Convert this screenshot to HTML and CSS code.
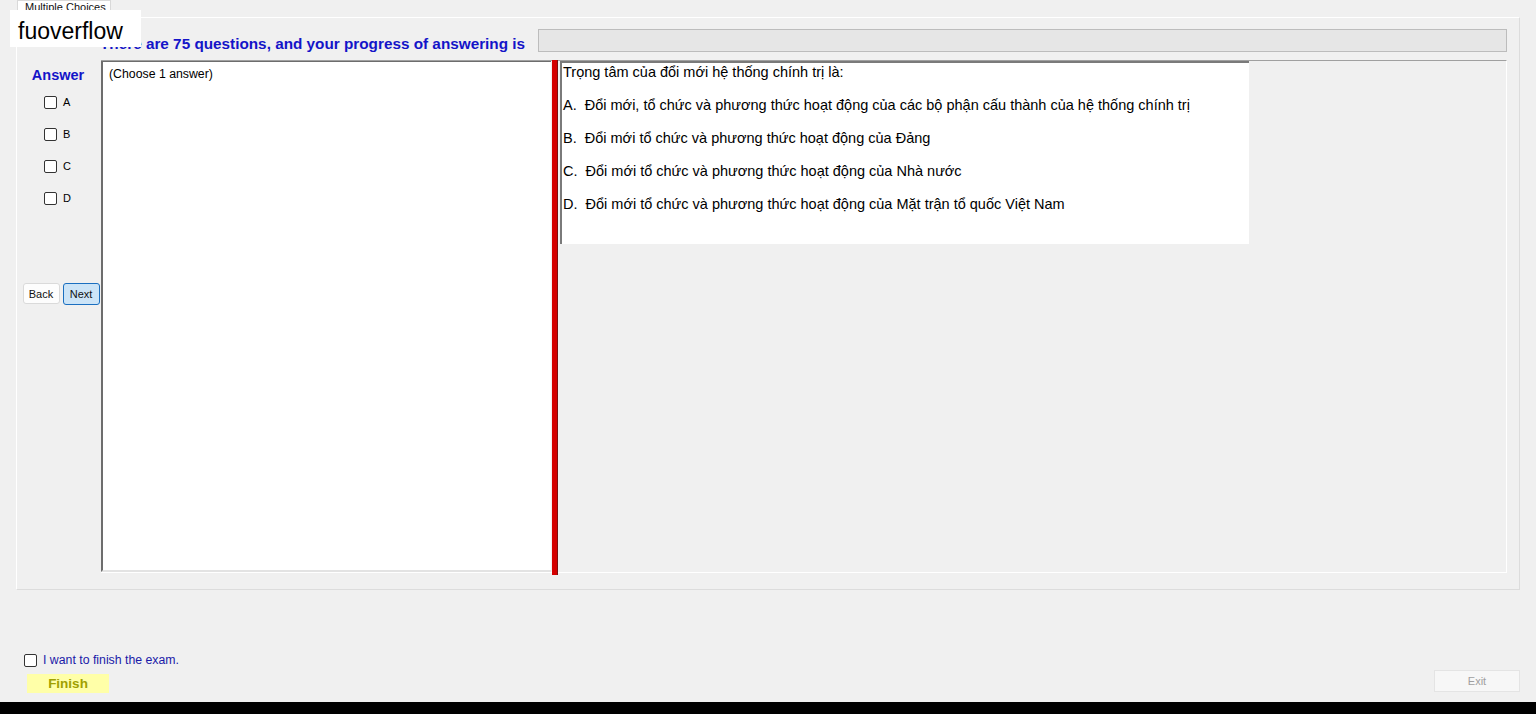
FILE: index.html
```html
<!DOCTYPE html>
<html>
<head>
<meta charset="utf-8">
<title>Multiple Choices</title>
<link rel="stylesheet" href="styles.css">
</head>
<body>
<div class="brand">fuoverflow</div>

<div class="tabs">
  <span class="tab">Multiple Choices</span>
</div>

<div class="tabpage">
  <div class="top">
    <div class="progress-text">There are 75 questions, and your progress of answering is</div>
    <div class="progress"></div>
  </div>

  <div class="work">
    <div class="answers">
      <div class="answers-title">Answer</div>
      <label class="opt"><span class="box"></span>A</label>
      <label class="opt"><span class="box"></span>B</label>
      <label class="opt"><span class="box"></span>C</label>
      <label class="opt"><span class="box"></span>D</label>
      <div class="nav">
        <button class="btn">Back</button>
        <button class="btn btn-focus">Next</button>
      </div>
    </div>

    <div class="panes">
      <div class="note">(Choose 1 answer)</div>
      <div class="splitter"></div>
      <div class="question-area">
        <div class="question">
          <p>Trọng tâm của đổi mới hệ thống chính trị là:</p>
          <p>A.&nbsp; Đổi mới, tổ chức và phương thức hoạt động của các bộ phận cấu thành của hệ thống chính trị</p>
          <p>B.&nbsp; Đổi mới tổ chức và phương thức hoạt động của Đảng</p>
          <p>C.&nbsp; Đổi mới tổ chức và phương thức hoạt động của Nhà nước</p>
          <p>D.&nbsp; Đổi mới tổ chức và phương thức hoạt động của Mặt trận tổ quốc Việt Nam</p>
        </div>
      </div>
    </div>
  </div>
</div>

<div class="footer">
  <div class="finish-col">
    <label class="finish-check"><span class="box"></span>I want to finish the exam.</label>
    <div class="finish">Finish</div>
  </div>
  <button class="btn exit" disabled>Exit</button>
</div>

<div class="taskbar"></div>
</body>
</html>
```

FILE: styles.css
```css
body {
  margin: 0;
  background-color: #f0f0f0;
  font-family: "Liberation Sans", Arial, sans-serif;
  font-size: 12px;
  color: #000;
  height: 714px;
  overflow: hidden;
  position: relative;
}

/* watermark badge over the window */
.brand {
  position: absolute;
  left: 10px;
  top: 10px;
  width: 131px;
  height: 37px;
  background: #fff;
  font-size: 23px;
  line-height: 42px;
  padding-left: 8px;
  box-sizing: border-box;
  color: #000;
}

.tabs {
  height: 17px;
  padding-left: 17px;
  display: flex;
  align-items: flex-end;
}
.tab {
  display: block;
  height: 16px;
  padding: 0 4px 0 7px;
  background: #fff;
  border: 1px solid #d9d9d9;
  border-bottom: none;
  font-size: 11px;
  line-height: 12px;
  color: #111;
  overflow: hidden;
}

.tabpage {
  margin-left: 16px;
  width: 1504px;
  height: 573px;
  box-sizing: border-box;
  border: 1px solid #dcdcdc;
  border-top-color: #fff;
  border-left-color: #fff;
}

.top {
  display: flex;
  height: 42px;
}
.progress-text {
  margin-left: 83px;
  width: 438px;
  padding-top: 17px;
  font-weight: bold;
  font-size: 15.3px;
  line-height: 18px;
  color: #1414c8;
  white-space: nowrap;
}
.progress {
  margin-top: 11px;
  width: 969px;
  height: 23px;
  box-sizing: border-box;
  background: #e6e6e6;
  border: 1px solid #bcbcbc;
}

.work {
  display: flex;
}

.answers {
  width: 84px;
  display: flex;
  flex-direction: column;
  align-items: center;
}
.answers-title {
  margin-top: 7px;
  font-weight: bold;
  font-size: 14.5px;
  color: #1414c8;
  height: 20px;
  margin-bottom: 8px;
  margin-left: -2px;
}
.opt {
  display: flex;
  align-items: center;
  height: 14px;
  margin-bottom: 18px;
  padding-left: 0;
  width: 30px;
  font-size: 11px;
}
.box {
  display: inline-block;
  width: 11px;
  height: 11px;
  border: 1px solid #333;
  border-radius: 2px;
  background: #fff;
  margin-right: 6px;
}

.nav {
  margin-top: 60px;
  display: flex;
  gap: 3px;
  padding-left: 4px;
}
.btn {
  font-family: "Liberation Sans", Arial, sans-serif;
  font-size: 11px;
  height: 21px;
  width: 37px;
  padding: 0;
  background: #fdfdfd;
  border: 1px solid #dadada;
  border-radius: 3px;
  color: #111;
}
.btn-focus {
  background: #cce4f7;
  border-color: #1b6fc0;
  height: 22px;
}

.panes {
  display: flex;
  width: 1406px;
  height: 513px;
  box-sizing: border-box;
  border-top: 1px solid #a0a0a0;
  border-right: 1px solid #fff;
  border-bottom: 1px solid #fff;
}

.note {
  width: 450px;
  box-sizing: border-box;
  background: #fff;
  border-left: 2px solid #6d6d6d;
  border-top: 1px solid #6d6d6d;
  border-bottom: 2px solid #e3e3e3;
  padding: 5px 6px;
  font-size: 12.3px;
}

.splitter {
  width: 5px;
  margin: -1px 2px -3px 1px;
  background: #d40000;
  border-right: 1px solid #7a1010;
}

.question-area {
  flex: 1;
}
.question {
  width: 689px;
  height: 183px;
  box-sizing: border-box;
  background: #fff;
  border-left: 2px solid #7a7a7a;
  border-top: 2px solid #7a7a7a;
  padding: 1px 4px 0 1px;
  font-size: 14.5px;
}
.question p {
  margin: 0 0 17px;
  line-height: 16px;
  white-space: nowrap;
}

.footer {
  display: flex;
  justify-content: space-between;
  align-items: flex-end;
  height: 103px;
}
.finish-col {
  padding-left: 24px;
}
.finish-check {
  display: flex;
  align-items: center;
  color: #1a1aa8;
  font-size: 12.3px;
  height: 16px;
  margin-bottom: 6px;
}
.finish-check .box {
  margin-right: 6px;
}
.finish {
  margin-left: 3px;
  width: 82px;
  height: 19px;
  background: #ffffa8;
  color: #a0a000;
  font-weight: bold;
  font-size: 13.5px;
  line-height: 20px;
  text-align: center;
}
.exit {
  width: 86px;
  height: 22px;
  margin-right: 16px;
  margin-bottom: 1px;
  background: #f7f7f7;
  border-color: #e4e4e4;
  color: #a0a0a0;
  border-radius: 0;
}

.taskbar {
  margin-top: 9px;
  height: 12px;
  background: #000;
}
```
